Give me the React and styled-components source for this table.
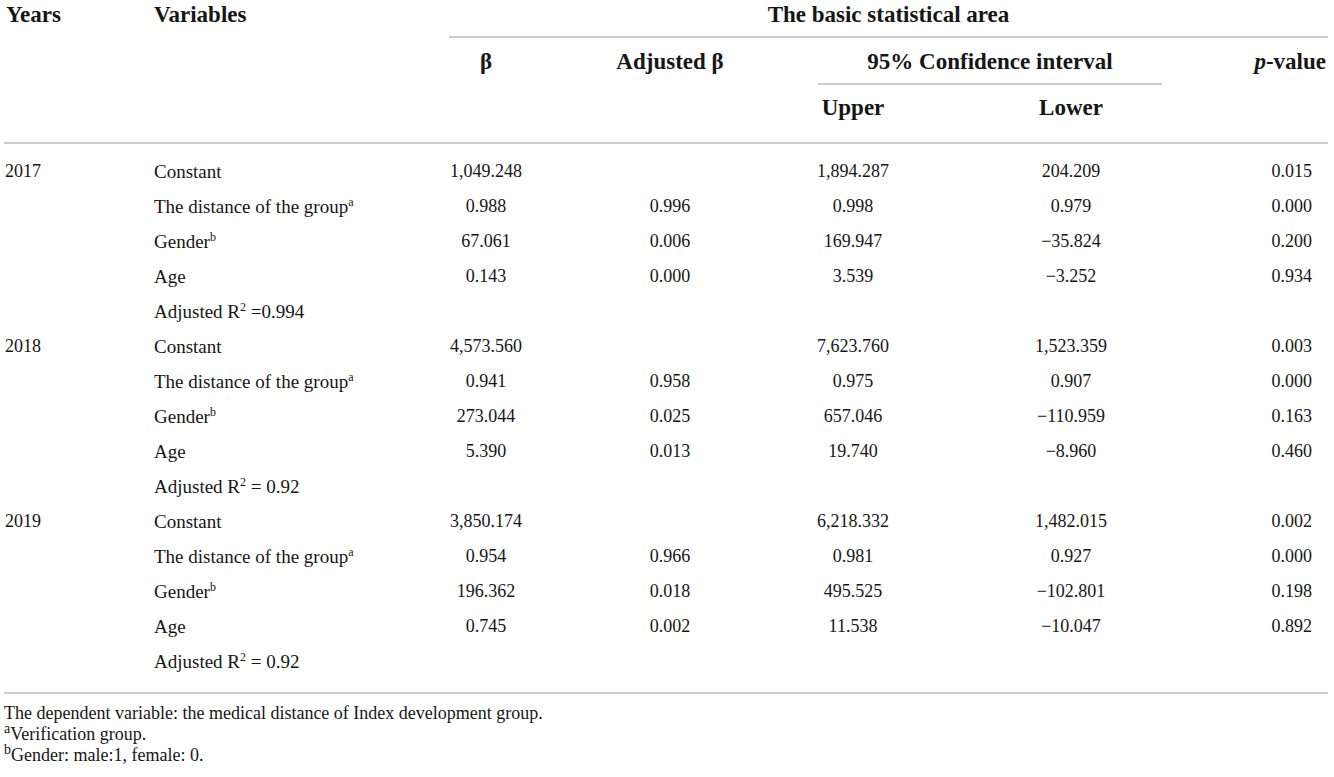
import React from "react";
import styled, { createGlobalStyle } from "styled-components";

const Global = createGlobalStyle`
  html, body { margin: 0; padding: 0; background: #ffffff; }
  body { font-family: "Liberation Serif", "Times New Roman", serif; color: #161616; }
`;

const Page = styled.div`
  padding: 0 6px 0 4px;
  width: 1324px;
`;

const Table = styled.table`
  width: 1324px;
  table-layout: fixed;
  border-collapse: collapse;
  border-spacing: 0;
`;

const Head = styled.thead`
  border-bottom: 2px solid #cccccc;
`;

const Body = styled.tbody`
  border-bottom: 2px solid #cccccc;
  tr:first-child td { padding-top: 10px; }
  tr:last-child td { padding-bottom: 13px; }
`;

const HeadCell = styled.th`
  padding: ${(p) => p.$pad || "0"};
  vertical-align: top;
  text-align: ${(p) => p.$align || "center"};
  font-size: 23px;
  font-weight: 700;
  line-height: 24px;
  white-space: nowrap;
`;

const Spanner = styled.div`
  margin: ${(p) => p.$margin || "0"};
  padding: ${(p) => p.$pad || "0"};
  border-bottom: 2px solid #cccccc;
`;

const Cell = styled.td`
  padding: 0 ${(p) => p.$right || 0}px 0 ${(p) => p.$left || 0}px;
  height: 35px;
  line-height: 35px;
  font-size: ${(p) => (p.$label ? "19px" : "18px")};
  text-align: ${(p) => p.$align || "center"};
  white-space: nowrap;
  vertical-align: middle;
`;

const Sup = styled.sup`
  font-size: ${(p) => (p.$big ? "14px" : "12px")};
  line-height: 0;
  vertical-align: 7px;
`;

const Italic = styled.i`
  font-style: italic;
`;

const Notes = styled.div`
  padding-top: 9px;
  font-size: 18px;
  line-height: 21px;
`;

const Note = styled.div`
  white-space: nowrap;
`;

const groups = [
  {
    year: "2017",
    r2: "=0.994",
    rows: [
      ["Constant", "", "1,049.248", "", "1,894.287", "204.209", "0.015"],
      ["The distance of the group", "a", "0.988", "0.996", "0.998", "0.979", "0.000"],
      ["Gender", "b", "67.061", "0.006", "169.947", "\u221235.824", "0.200"],
      ["Age", "", "0.143", "0.000", "3.539", "\u22123.252", "0.934"],
    ],
  },
  {
    year: "2018",
    r2: "= 0.92",
    rows: [
      ["Constant", "", "4,573.560", "", "7,623.760", "1,523.359", "0.003"],
      ["The distance of the group", "a", "0.941", "0.958", "0.975", "0.907", "0.000"],
      ["Gender", "b", "273.044", "0.025", "657.046", "\u2212110.959", "0.163"],
      ["Age", "", "5.390", "0.013", "19.740", "\u22128.960", "0.460"],
    ],
  },
  {
    year: "2019",
    r2: "= 0.92",
    rows: [
      ["Constant", "", "3,850.174", "", "6,218.332", "1,482.015", "0.002"],
      ["The distance of the group", "a", "0.954", "0.966", "0.981", "0.927", "0.000"],
      ["Gender", "b", "196.362", "0.018", "495.525", "\u2212102.801", "0.198"],
      ["Age", "", "0.745", "0.002", "11.538", "\u221210.047", "0.892"],
    ],
  },
];

function DataRow({ year, row }) {
  const [label, sup, beta, adj, upper, lower, p] = row;
  return (
    <tr>
      <Cell $align="left" $left={1}>{year}</Cell>
      <Cell $label $align="left" $left={4}>
        {label}
        {sup && <Sup>{sup}</Sup>}
      </Cell>
      <Cell>{beta}</Cell>
      <Cell>{adj}</Cell>
      <Cell>{upper}</Cell>
      <Cell>{lower}</Cell>
      <Cell $align="right" $right={16}>{p}</Cell>
    </tr>
  );
}

export default function App() {
  return (
    <Page>
      <Global />
      <Table>
        <colgroup>
          <col style={{ width: 146 }} />
          <col style={{ width: 265 }} />
          <col style={{ width: 142 }} />
          <col style={{ width: 226 }} />
          <col style={{ width: 140 }} />
          <col style={{ width: 296 }} />
          <col style={{ width: 109 }} />
        </colgroup>
        <Head>
          <tr>
            <HeadCell rowSpan={3} $align="left" $pad="3px 0 0 2px">Years</HeadCell>
            <HeadCell rowSpan={3} $align="left" $pad="3px 0 0 4px">Variables</HeadCell>
            <HeadCell colSpan={5}>
              <Spanner $margin="0 0 0 34px" $pad="3px 0 9px 0">The basic statistical area</Spanner>
            </HeadCell>
          </tr>
          <tr>
            <HeadCell rowSpan={2} $pad="12px 0 0 0">β</HeadCell>
            <HeadCell rowSpan={2} $pad="12px 0 0 0">Adjusted β</HeadCell>
            <HeadCell colSpan={2}>
              <Spanner $margin="0 57px 0 35px" $pad="12px 0 9px 0">95% Confidence interval</Spanner>
            </HeadCell>
            <HeadCell rowSpan={2} $align="right" $pad="12px 2px 0 0">
              <Italic>p</Italic>-value
            </HeadCell>
          </tr>
          <tr>
            <HeadCell $pad="11px 0 22px 0">Upper</HeadCell>
            <HeadCell $pad="11px 0 22px 0">Lower</HeadCell>
          </tr>
        </Head>
        <Body>
          {groups.map((g) => (
            <React.Fragment key={g.year}>
              {g.rows.map((r, i) => (
                <DataRow key={g.year + i} year={i === 0 ? g.year : ""} row={r} />
              ))}
              <tr>
                <Cell />
                <Cell $label $align="left" $left={4}>
                  Adjusted R<Sup>2</Sup> {g.r2}
                </Cell>
                <Cell />
                <Cell />
                <Cell />
                <Cell />
                <Cell />
              </tr>
            </React.Fragment>
          ))}
        </Body>
      </Table>
      <Notes>
        <Note>The dependent variable: the medical distance of Index development group.</Note>
        <Note><Sup $big>a</Sup>Verification group.</Note>
        <Note><Sup $big>b</Sup>Gender: male:1, female: 0.</Note>
      </Notes>
    </Page>
  );
}
